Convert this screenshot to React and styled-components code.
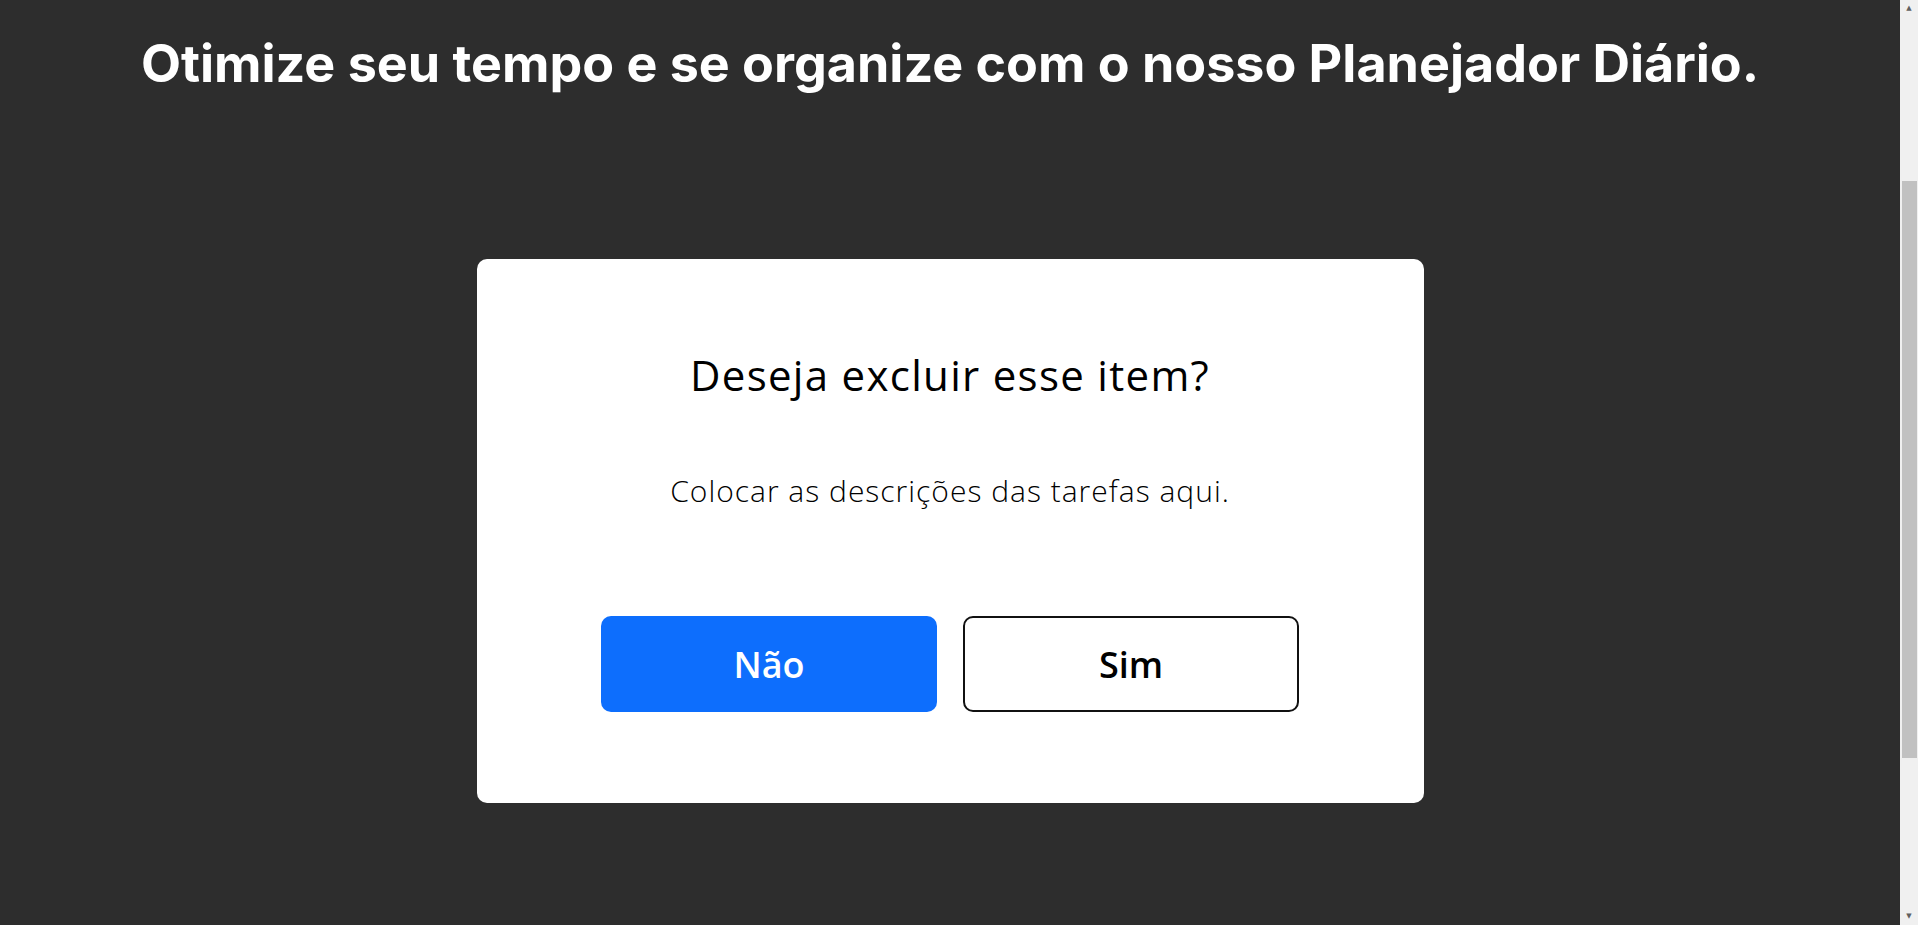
import React from "react";
import styled, { createGlobalStyle } from "styled-components";

const GlobalStyle = createGlobalStyle`
  body {
    margin: 0;
    background-color: #2d2d2d;
    font-family: "Open Sans", "Noto Sans", sans-serif;
  }
`;

const Page = styled.div`
  min-height: 925px;
  display: flex;
`;

const Main = styled.main`
  flex: 1;
  display: flex;
  flex-direction: column;
  align-items: center;
`;

const ScrollTrack = styled.div`
  width: 18px;
  height: 925px;
  background-color: #f0f0f0;
  display: flex;
  flex-direction: column;
  align-items: center;
`;

const ScrollArrow = styled.div`
  height: 17px;
  width: 100%;
  margin-top: ${(p) => (p.$down ? "auto" : "0")};
  display: flex;
  align-items: center;
  justify-content: center;
  color: #606060;
  font-size: 7px;
  line-height: 1;
  font-family: "DejaVu Sans", sans-serif;
`;

const ScrollThumb = styled.div`
  margin-top: 164px;
  width: 15px;
  height: 577px;
  background-color: #c1c1c1;
`;

const Title = styled.h1`
  margin: 0;
  padding-top: 29px;
  font-family: "Inter", "Noto Sans", sans-serif;
  font-size: 52px;
  font-weight: 700;
  line-height: 70px;
  color: #fff;
  text-align: center;
`;

const Modal = styled.div`
  margin-top: 160px;
  width: 947px;
  height: 544px;
  box-sizing: border-box;
  padding-top: 88px;
  background-color: #fff;
  border-radius: 10px;
  display: flex;
  flex-direction: column;
  align-items: center;
`;

const Question = styled.h2`
  margin: 0;
  font-size: 42px;
  font-weight: 500;
  letter-spacing: 1.3px;
  line-height: 56px;
  color: #000;
`;

const Description = styled.p`
  margin: 68px 0 0;
  font-size: 30px;
  font-weight: 300;
  letter-spacing: 1px;
  line-height: 40px;
  color: #000;
`;

const Actions = styled.div`
  margin-top: 105px;
  display: flex;
  gap: 26px;
`;

const Button = styled.button`
  width: 336px;
  height: 96px;
  box-sizing: border-box;
  border-radius: 10px;
  font-family: "Open Sans", "Noto Sans", sans-serif;
  font-size: 36px;
  font-weight: 600;
  cursor: pointer;
  border: ${(p) => (p.$primary ? "none" : "2px solid #111")};
  background-color: ${(p) => (p.$primary ? "#0d6efd" : "#fff")};
  color: ${(p) => (p.$primary ? "#fff" : "#000")};
`;

export default function App() {
  return (
    <>
      <GlobalStyle />
      <Page>
        <Main>
          <Title>Otimize seu tempo e se organize com o nosso Planejador Diário.</Title>
          <Modal>
            <Question>Deseja excluir esse item?</Question>
            <Description>Colocar as descrições das tarefas aqui.</Description>
            <Actions>
              <Button $primary>Não</Button>
              <Button>Sim</Button>
            </Actions>
          </Modal>
        </Main>
        <ScrollTrack>
          <ScrollArrow>▲</ScrollArrow>
          <ScrollThumb />
          <ScrollArrow $down>▼</ScrollArrow>
        </ScrollTrack>
      </Page>
    </>
  );
}
